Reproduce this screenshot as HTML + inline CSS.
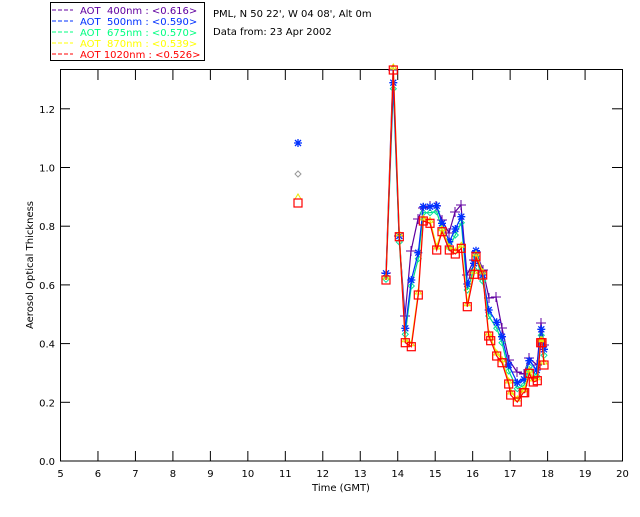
<!DOCTYPE html>
<html><head><meta charset="utf-8"><style>
body{margin:0;background:#fff;width:640px;height:512px;overflow:hidden}
svg text{font-family:"DejaVu Sans","Liberation Sans",sans-serif;font-size:10px}
</style></head><body>
<svg id="s" width="640" height="512" xmlns="http://www.w3.org/2000/svg">
<rect x="50.5" y="2.5" width="154" height="58" fill="#fff" stroke="#000"/>
<g stroke-width="1" stroke-dasharray="4,2">
<line x1="52" y1="10" x2="73" y2="10" stroke="#6000a0"/>
<line x1="52" y1="21" x2="73" y2="21" stroke="#0030ff"/>
<line x1="52" y1="32" x2="73" y2="32" stroke="#00ff80"/>
<line x1="52" y1="43" x2="73" y2="43" stroke="#ffff00"/>
<line x1="52" y1="54" x2="73" y2="54" stroke="#ff0000"/>
</g>
<text x="80" y="14" fill="#6000a0" xml:space="preserve">AOT  400nm : &lt;0.616&gt;</text>
<text x="80" y="25" fill="#0030ff" xml:space="preserve">AOT  500nm : &lt;0.590&gt;</text>
<text x="80" y="36" fill="#00ff80" xml:space="preserve">AOT  675nm : &lt;0.570&gt;</text>
<text x="80" y="47" fill="#ffff00" xml:space="preserve">AOT  870nm : &lt;0.539&gt;</text>
<text x="80" y="58" fill="#ff0000" xml:space="preserve">AOT 1020nm : &lt;0.526&gt;</text>
<text x="213" y="17" fill="#000">PML, N 50 22', W 04 08', Alt 0m</text>
<text x="213" y="35" fill="#000">Data from: 23 Apr 2002</text>
<rect x="60.5" y="69.5" width="562" height="391.5" fill="none" stroke="#000"/>
<text x="341" y="491" text-anchor="middle">Time (GMT)</text>
<text transform="translate(33,265) rotate(-90)" text-anchor="middle" font-size="9">Aerosol Optical Thickness</text>
<g id="ax" stroke="#000"></g>
<g id="d"></g>
</svg>
<script>
var s=document.getElementById('ax'),d=document.getElementById('d'),NS='http://www.w3.org/2000/svg',svg=document.getElementById('s');
function el(p,t,a){var e=document.createElementNS(NS,t);for(var k in a)e.setAttribute(k,a[k]);p.appendChild(e);return e}
for(var h=5;h<=20;h++){var x=60.5+(h-5)*37.47;
 if(h>5&&h<20){el(s,'line',{x1:x,y1:461,x2:x,y2:451});el(s,'line',{x1:x,y1:70,x2:x,y2:80});}
 var t=el(svg,'text',{x:x,y:477,'text-anchor':'middle'});t.textContent=h;}
for(var i=0;i<=6;i++){var v=i*0.2,y=461-v*293.5;
 if(i>0){el(s,'line',{x1:60,y1:y,x2:70,y2:y});el(s,'line',{x1:622,y1:y,x2:612,y2:y});}
 var t=el(svg,'text',{x:55,y:y+4,'text-anchor':'end'});t.textContent=v.toFixed(1);}
var R=[[386,280],[393.3,70],[399.3,236.7],[405.3,342.7],[411.3,346.7],[418.3,295],[423.3,221],[430,223.3],[436.7,250],[442,231.7],[449.3,250],[455.3,254],[461.3,248.3],[467.3,306.7],[474,274.3],[476,256.7],[482.7,275],[488.7,336],[490.7,340.7],[496.7,356],[502,362.7],[508.7,384],[510.7,395],[517.3,402],[523.3,392.7],[524.7,392.7],[529.3,373.3],[533.3,382],[537.3,380.7],[540.7,342.7],[542,342.7],[544,365]];
var B=[[386,273.3],[393.3,82.7],[399.3,236],[405.3,328.3],[411.3,280],[418.3,252.7],[423.3,206.7],[430,206.7],[436.7,205.7],[442,223.3],[449.3,241.7],[455.3,229],[461.3,216.7],[467.3,284],[474,263.3],[476,250.7],[482.7,275],[488.7,310],[496.7,322.3],[502,336.7],[508.7,365],[517.3,382.7],[524,379.3],[529.3,360.7],[536.7,370],[541.3,329.3],[544,349.3]];
var P=[[386,273],[393,70],[399,236],[405,316],[411,251],[418,219],[423,208],[430,206],[436,206],[442,220],[449,233],[455,212],[461,205],[467,275],[474,260],[476,252],[483,270],[489,298],[496,297],[502,328],[509,360],[517,372],[524,374],[529,358],[537,365],[541,323],[544,345]];
var G=B.map(function(p){return [p[0],p[1]+6]});
var Y=R.map(function(p){return [p[0],p[1]-3]});
function line(pts,c){el(d,'polyline',{points:pts.map(function(p){return p.join(',')}).join(' '),fill:'none',stroke:c,'stroke-width':1.2});}
function mk(pts,c,type){pts.forEach(function(p){var x=p[0],y=p[1];
 if(type=='sq')el(d,'rect',{x:x-4,y:y-4,width:8,height:8,fill:'none',stroke:c,'stroke-width':1.2});
 else if(type=='plus')el(d,'path',{d:'M'+(x-5)+' '+y+'h10M'+x+' '+(y-5)+'v10',stroke:c});
 else if(type=='star')el(d,'path',{d:'M'+(x-4)+' '+y+'h8M'+x+' '+(y-4)+'v8M'+(x-3)+' '+(y-3)+'l6 6M'+(x+3)+' '+(y-3)+'l-6 6',stroke:c,'stroke-width':1.3});
 else if(type=='dia')el(d,'path',{d:'M'+x+' '+(y-3)+'l3 3l-3 3l-3-3z',fill:'none',stroke:c});
 else el(d,'path',{d:'M'+x+' '+(y-3)+'l3 5h-6z',fill:'none',stroke:c});});}
line(P,'#6000a0');mk(P,'#6000a0','plus');
line(G,'#00e080');mk(G,'#00e0a0','dia');
line(B,'#0030ff');mk(B,'#0030ff','star');
line(Y,'#e8e800');mk(Y,'#e8e800','tri');
line(R,'#ff0000');mk(R,'#ff0000','sq');
mk([[298,143]],'#0030ff','star');mk([[298,174]],'#999','dia');mk([[298,197]],'#e8e800','tri');mk([[298,203]],'#ff0000','sq');
</script>
</body></html>
